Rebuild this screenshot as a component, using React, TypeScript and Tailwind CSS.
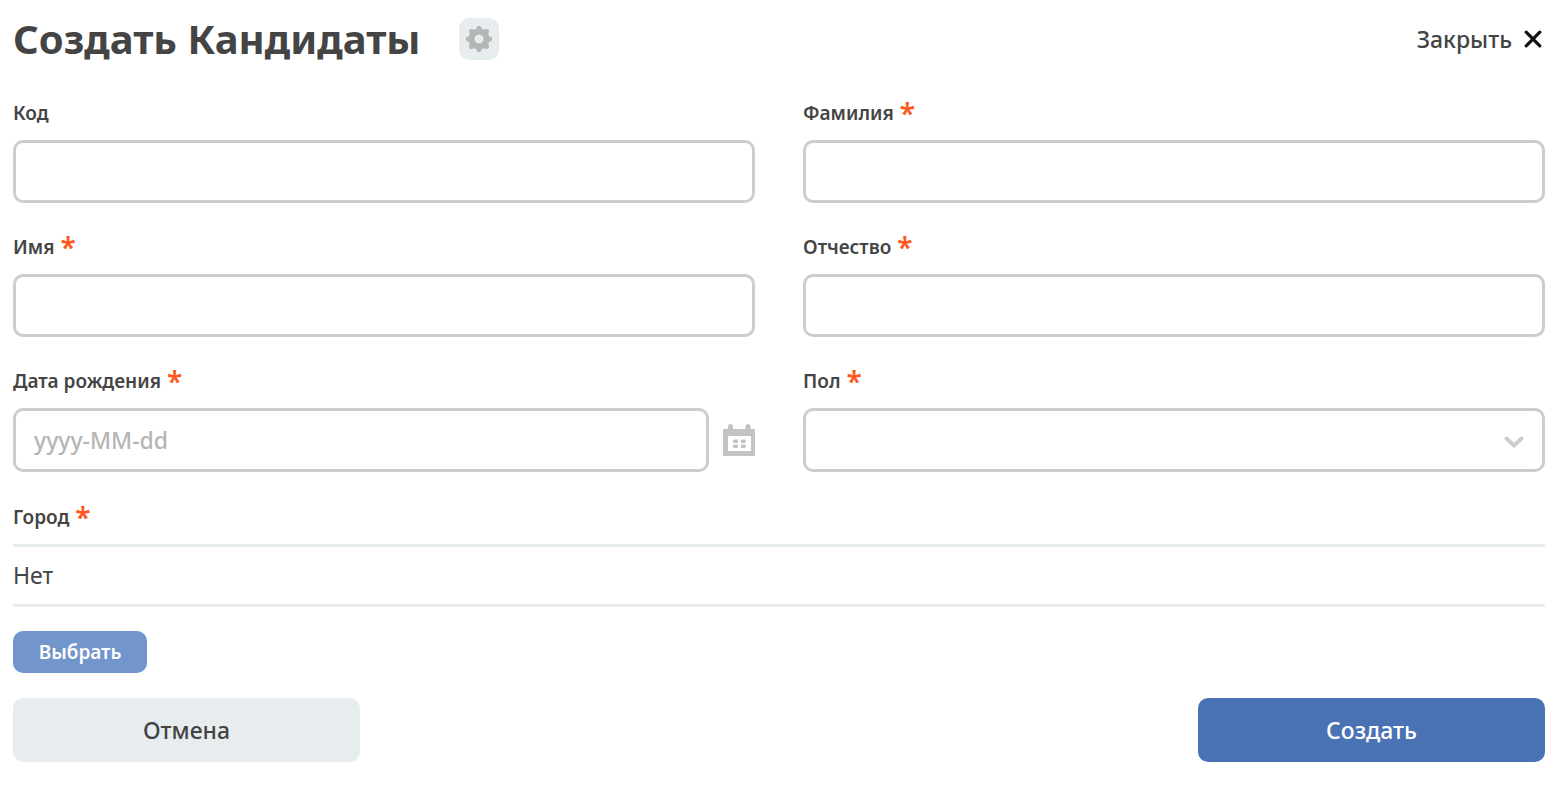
import { useId, type ReactNode } from 'react';

const inputClass =
  'block w-full min-w-0 rounded-[10px] border-[3px] border-[#cdcdcd] bg-white px-[18px] text-[23px] font-medium text-[#444] outline-none placeholder:text-[#b5b5b5] placeholder:opacity-100 focus:border-[#4a73b6]';

const labelClass = 'mb-[13px] flex h-7 items-center gap-[6px] text-[19px] font-semibold leading-7';

function Required() {
  return (
    <span aria-hidden="true" className="text-[28px] leading-7 text-[#ff5722]">
      *
    </span>
  );
}

function Field({
  label,
  required = false,
  children,
}: {
  label: string;
  required?: boolean;
  children: (id: string) => ReactNode;
}) {
  const id = useId();
  return (
    <div>
      <label htmlFor={id} className={labelClass}>
        {label}
        {required && <Required />}
      </label>
      {children(id)}
    </div>
  );
}

function TextField({ label, required }: { label: string; required?: boolean }) {
  return (
    <Field label={label} required={required}>
      {(id) => <input id={id} type="text" required={required} className={`${inputClass} h-[63px]`} />}
    </Field>
  );
}

const teeth = [0, 45, 90, 135, 180, 225, 270, 315];

function GearIcon() {
  return (
    <svg viewBox="-13 -13 26 26" className="size-[26px]" fill="#b5b5b5" aria-hidden="true">
      <circle r="7.5" fill="none" stroke="#b5b5b5" strokeWidth="5.8" />
      {teeth.map((a) => (
        <path key={a} d="M-4 -9.2 Q-2.4 -10 -2 -12 Q-1.8 -13 -1 -13 H1 Q1.8 -13 2 -12 Q2.4 -10 4 -9.2 Z" transform={`rotate(${a})`} />
      ))}
    </svg>
  );
}

function CalendarIcon() {
  return (
    <svg viewBox="0 0 32 32" className="size-8" fill="#c3c3c3" aria-hidden="true">
      <rect x="5" y="0" width="5" height="8" rx="2.5" />
      <rect x="22.5" y="0" width="5" height="8" rx="2.5" />
      <path fillRule="evenodd" d="M1 5H31Q32 5 32 6V31Q32 32 31 32H1Q0 32 0 31V6Q0 5 1 5ZM5 12V27H28V12Z" />
      <rect x="10" y="15.6" width="5" height="3.4" rx="1.2" />
      <rect x="17.8" y="15.6" width="5" height="3.4" rx="1.2" />
      <rect x="10" y="20.6" width="5" height="3.4" rx="1.2" />
      <rect x="17.8" y="20.6" width="5" height="3.4" rx="1.2" />
    </svg>
  );
}

export default function App() {
  return (
    <main className="min-h-screen bg-white pr-[14px] pl-[13px] font-['Noto_Sans',sans-serif] text-[#444]">
      <header className="flex h-[78px] items-center justify-between">
        <div className="flex items-center gap-[38px]">
          <h1 className="text-[40px] font-bold leading-none">Создать Кандидаты</h1>
          <button
            type="button"
            aria-label="Настройки"
            className="flex h-[42px] w-10 items-center justify-center rounded-[10px] bg-[#e7edef]"
          >
            <GearIcon />
          </button>
        </div>
        <button type="button" className="flex items-center gap-3 pr-[3px] text-[23px] font-medium">
          Закрыть
          <svg viewBox="0 0 18 18" className="size-[18px]" fill="none" stroke="#111" strokeWidth="3.2" strokeLinecap="round" aria-hidden="true">
            <path d="M2.2 2.2 15.8 15.8M15.8 2.2 2.2 15.8" />
          </svg>
        </button>
      </header>

      <form className="pt-[21px]" onSubmit={(e) => e.preventDefault()}>
        <div className="grid grid-cols-2 gap-x-12 gap-y-[30px]">
          <TextField label="Код" />
          <TextField label="Фамилия" required />
          <TextField label="Имя" required />
          <TextField label="Отчество" required />
          <Field label="Дата рождения" required>
            {(id) => (
              <div className="flex items-center gap-[14px]">
                <input id={id} type="text" required placeholder="yyyy-MM-dd" className={`${inputClass} h-16`} />
                <button type="button" aria-label="Открыть календарь" className="shrink-0">
                  <CalendarIcon />
                </button>
              </div>
            )}
          </Field>
          <Field label="Пол" required>
            {(id) => (
              <div className="relative">
                <select id={id} required defaultValue="" className={`${inputClass} h-16 appearance-none`}>
                  <option value=""></option>
                  <option value="m">Мужской</option>
                  <option value="f">Женский</option>
                </select>
                <svg
                  viewBox="0 0 20 12"
                  className="pointer-events-none absolute top-7 right-[21px] h-3 w-5"
                  fill="none"
                  stroke="#cdcdcd"
                  strokeWidth="4"
                  strokeLinecap="round"
                  aria-hidden="true"
                >
                  <path d="M2.5 2.5 10 9.5 17.5 2.5" />
                </svg>
              </div>
            )}
          </Field>
        </div>

        <section className="mt-[31px]">
          <h2 className={labelClass}>
            Город
            <Required />
          </h2>
          <p className="flex h-[63px] items-center border-y-[3px] border-[#e7edef] text-[23px]">Нет</p>
          <button
            type="button"
            className="mt-6 h-[42px] w-[134px] rounded-[10px] bg-[#7295cc] text-[19px] font-semibold text-white"
          >
            Выбрать
          </button>
        </section>

        <footer className="mt-[25px] flex justify-between gap-6 text-[23px] font-medium">
          <button type="button" className="h-16 w-[347px] rounded-[10px] bg-[#e7edef]">
            Отмена
          </button>
          <button type="submit" className="h-16 w-[347px] rounded-[10px] bg-[#4a73b6] text-white">
            Создать
          </button>
        </footer>
      </form>
    </main>
  );
}
